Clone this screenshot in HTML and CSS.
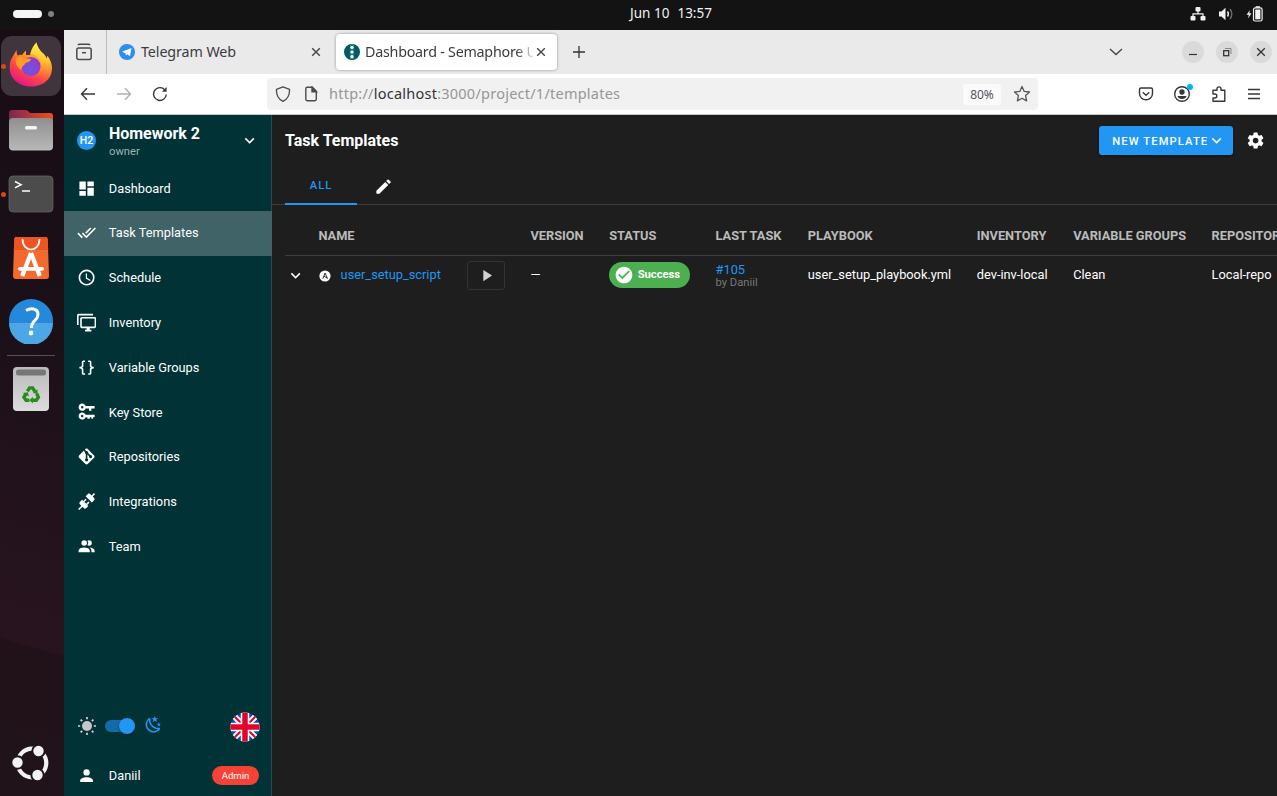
FILE: index.html
```html
<!DOCTYPE html>
<html lang="en">
<head>
<meta charset="utf-8">
<title>Dashboard - Semaphore UI</title>
<link rel="stylesheet" href="styles.css">
</head>
<body>
<div class="desktop">
  <header class="topbar">
    <div class="workspaces"><i class="ws-active"></i><i class="ws-dot"></i></div>
    <div class="clock"><span>Jun 10</span><span>13:57</span></div>
    <div class="tray">
      <svg width="16" height="14" viewBox="0 0 16 14" fill="#f2f2f2"><rect x="5.500" y="0" width="5" height="4.500" rx="1"/><rect x="0.500" y="9" width="5" height="4.500" rx="1"/><rect x="10.500" y="9" width="5" height="4.500" rx="1"/><path d="M8 4v3M3 9.500V6.800h10v2.700" fill="none" stroke="#f2f2f2" stroke-width="1.200"/></svg>
      <svg width="16" height="14" viewBox="0 0 16 14"><path d="M1 4.500h2.500L7.500 0.800v12.400L3.500 9.500H1z" fill="#f2f2f2"/><path d="M9.500 4.500q1.800 2.500 0 5" fill="none" stroke="#f2f2f2" stroke-width="1.400"/><path d="M12 2q3.600 5 0 10" fill="none" stroke="#6a6a6a" stroke-width="1.400"/></svg>
      <svg width="17" height="16" viewBox="0 0 17 16"><path d="M4 4L0.500 8.800h2.300L2 12.500 5.500 7.200H3.200z" fill="#f2f2f2"/><rect x="7.500" y="1.800" width="8.600" height="13.200" rx="1.800" fill="none" stroke="#f2f2f2" stroke-width="1.200"/><rect x="9.200" y="3.500" width="5.200" height="9.800" fill="#f2f2f2"/><rect x="9.700" y="0.200" width="4.200" height="1.500" fill="#f2f2f2"/></svg>
    </div>
  </header>

  <aside class="dock">
    <div class="dock-app focused"><i class="run-dot"></i>
      <svg width="44" height="46" viewBox="0 0 44 46">
        <defs>
          <linearGradient id="ff" x1="0.800" y1="0" x2="0.250" y2="1"><stop offset="0" stop-color="#ffe948"/><stop offset="0.350" stop-color="#ffa425"/><stop offset="0.650" stop-color="#ff4a45"/><stop offset="1" stop-color="#e3118c"/></linearGradient>
          <radialGradient id="ffg" cx="0.450" cy="0.650" r="0.650"><stop offset="0" stop-color="#6a58e0"/><stop offset="1" stop-color="#9a35cf"/></radialGradient>
          <linearGradient id="fft" x1="0" y1="0" x2="0" y2="1"><stop offset="0" stop-color="#ffef4a"/><stop offset="0.500" stop-color="#ffc433"/><stop offset="1" stop-color="#ff6a3a" stop-opacity="0"/></linearGradient>
        </defs>
        <path d="M7.500 8q0 3.500 1 5.500 2.500-1 4.500-.5 2-3 4-4.500v4.500h4C22 8 24 4 27.500 .5c1 5 3 7 5.500 10 2 1.500 4 4 4.500 6l1-2.500c3 4 4.500 8 4.500 12 0 11.500-9.500 18.500-21 18.500S.7 37 .7 26c0-4 .3-8 2.800-11z" fill="url(#ff)"/>
        <path d="M27.500 .5C24 4 22.500 8 21.500 12c7 1 12 6 10.500 14-2 6-6 9-11 9.500 9 4 19-1 20.500-11 .5-4-1-8-3-10.500l-1 2.500c-.5-2-2.500-4.500-4.500-6-2.500-3-4.500-5-5.500-10z" fill="url(#fft)"/>
        <circle cx="22" cy="24.500" r="9.500" fill="url(#ffg)"/>
        <path d="M6.500 17c3-2.500 7-3 9-1 2 1 5.500 0 6.500 1.500-1 3-6 3-6 4.500-1.500 2-3.500 2.500-3.500 6-4-2-6-6-6-11z" fill="#ff9b22"/>
      </svg>
    </div>
    <div class="dock-app">
      <svg width="46" height="44" viewBox="0 0 46 44"><defs><linearGradient id="fo" x1="0" x2="1"><stop offset="0" stop-color="#7c2550"/><stop offset="1" stop-color="#e8501f"/></linearGradient><linearGradient id="fg" x1="0" y1="0" x2="0" y2="1"><stop offset="0" stop-color="#8f8f8f"/><stop offset="1" stop-color="#b9b9b9"/></linearGradient></defs><path d="M1 34V5q0-3 3-3h13q2 0 3 1l2 2h20q3 0 3 3v26z" fill="url(#fo)"/><rect x="1" y="10" width="44" height="32.500" rx="4" fill="url(#fg)"/><rect x="17" y="18" width="12" height="3.500" rx="1.600" fill="#f5f5f5"/></svg>
    </div>
    <div class="dock-app"><i class="run-dot"></i>
      <svg width="46" height="38" viewBox="0 0 46 38"><rect x="1" y="1" width="44" height="36" rx="4" fill="#4c4c4c" stroke="#686868" stroke-width=".7"/><path d="M7 6.500l6 3.200-6 3.200" fill="none" stroke="#fff" stroke-width="1.500"/><path d="M14 16h8" stroke="#fff" stroke-width="1.500"/></svg>
    </div>
    <div class="dock-app">
      <svg width="38" height="44" viewBox="0 0 38 44"><path d="M4.500 1h29q2 0 2.200 2L37 40q0 3-3 3H4q-3 0-3-3L2.300 3q.2-2 2.200-2z" fill="#f4692e"/><path d="M4.500 1h29q2 0 2.200 2L36.200 14H1.800L2.300 3q.2-2 2.200-2z" fill="#ee5322"/><path d="M10.500 3c0 14 17 14 17 0" fill="none" stroke="#fff" stroke-width="1.700"/><path d="M19 17L10.200 40M19 17L27.800 40" stroke="#fff" stroke-width="4.300" fill="none"/><rect x="6" y="31" width="26" height="3.700" rx="1.800" fill="#fff"/></svg>
    </div>
    <div class="dock-app help">
      <svg width="46" height="46" viewBox="0 0 46 46"><circle cx="23" cy="23" r="22" fill="#2588db"/><path d="M1 25h44a22 22 0 0 1-44 0z" fill="#4ba7e6"/><path d="M18 12.500q4-2.300 7.500-1.500 4.500 1 4.500 5.500c0 4-2.500 5-4.500 7.500-1.800 2-2.200 3.500-2.200 6" fill="none" stroke="#fff" stroke-width="3"/><circle cx="23" cy="35" r="2.400" fill="#fff"/></svg>
    </div>
    <div class="dock-line"></div>
    <div class="dock-app trash">
      <svg width="38" height="46" viewBox="0 0 38 46"><defs><linearGradient id="tr" x1="0" y1="0" x2="0" y2="1"><stop offset="0" stop-color="#bababa"/><stop offset="1" stop-color="#dcdcdc"/></linearGradient></defs><rect x="1" y="1" width="36" height="44" rx="4" fill="url(#tr)"/><rect x="4" y="3.500" width="30" height="6" rx="2.500" fill="#777"/><g transform="translate(3 3.600) scale(.85)"><g fill="none" stroke="#288c1c" stroke-width="4"><path d="M14.500 25.500l2.700-4h3.500l2.800 4.500"/><path d="M25.500 28l2 4.500-2.500 3.500h-4.500"/><path d="M17 36h-4l-2.500-3.500 2.300-4"/></g><path d="M26.500 23v5.500l-5.500-1zM21 32v8l-4-4zM9 27.500l6-1 1.500 5z" fill="#288c1c"/></g></svg>
    </div>
    <div class="dock-app launcher">
      <svg width="38" height="38" viewBox="0 0 38 38"><circle cx="20" cy="19" r="14.300" fill="none" stroke="#f2f2f2" stroke-width="4.200"/><g fill="#f2f2f2" stroke="#21131a" stroke-width="2"><circle cx="5.500" cy="18.500" r="6.200"/><circle cx="26.500" cy="7" r="6.200"/><circle cx="25.500" cy="31" r="6.200"/></g></svg>
    </div>
  </aside>

  <main class="window">
    <div class="tabstrip">
      <div class="recent"><svg width="18" height="18" viewBox="0 0 18 18" fill="none" stroke="#4b4b4f" stroke-width="1.500"><path d="M3 2.200q.5-1 1.500-1h9q1 0 1.500 1"/><rect x="1.800" y="5" width="14.400" height="11.500" rx="2"/><path d="M7 9.700h4"/></svg></div>
      <div class="tab">
        <svg width="16" height="16" viewBox="0 0 16 16"><circle cx="8" cy="8" r="8" fill="#2f8df0"/><path d="M3 7.800L12.500 4 11 12.200 8.300 10.300 7 11.600 6.500 9.300z" fill="#fff"/><path d="M6.500 9.300L10.500 6 7.500 9.800" fill="#b9d8fa"/></svg>
        <span class="tab-title">Telegram Web</span>
        <svg class="x" width="10" height="10" viewBox="0 0 10 10"><path d="M1.200 1.200l7.600 7.600M8.800 1.200L1.200 8.800" stroke="#45454a" stroke-width="1.400"/></svg>
      </div>
      <div class="tab selected">
        <svg width="16" height="16" viewBox="0 0 16 16"><circle cx="8" cy="8" r="8" fill="#035a60"/><rect x="5.800" y="0.500" width="4.400" height="15" rx="1" fill="#2b747a"/><g fill="#fff"><circle cx="8" cy="3.300" r="1.600"/><circle cx="8" cy="8" r="1.600"/><circle cx="8" cy="12.700" r="1.600"/></g></svg>
        <span class="tab-title fade">Dashboard - Semaphore UI</span>
        <svg class="x" width="10" height="10" viewBox="0 0 10 10"><path d="M1.200 1.200l7.600 7.600M8.800 1.200L1.200 8.800" stroke="#45454a" stroke-width="1.400"/></svg>
      </div>
      <svg class="plus" width="14" height="14" viewBox="0 0 14 14"><path d="M7 1v12M1 7h12" stroke="#333" stroke-width="1.300"/></svg>
      <svg class="tabs-menu" width="14" height="10" viewBox="0 0 14 10"><path d="M1 2l6 5.500L13 2" fill="none" stroke="#45454a" stroke-width="1.400"/></svg>
      <div class="controls">
        <span><svg width="10" height="10" viewBox="0 0 10 10"><path d="M1 7.500h8" stroke="#333" stroke-width="1.200"/></svg></span>
        <span><svg width="10" height="10" viewBox="0 0 10 10" fill="none"><path d="M3 1.500h6V7" stroke="#888" stroke-width="1"/><rect x="1.700" y="3.700" width="5" height="5" stroke="#333" stroke-width="1.300"/></svg></span>
        <span><svg width="10" height="10" viewBox="0 0 10 10"><path d="M1.200 1.200l7.600 7.600M8.800 1.200L1.200 8.800" stroke="#333" stroke-width="1.300"/></svg></span>
      </div>
    </div>

    <div class="navbar">
      <svg width="16" height="16" viewBox="0 0 16 16" fill="none" stroke="#37373b" stroke-width="1.400"><path d="M15 8H1.500M7 2.300L1.500 8 7 13.700"/></svg>
      <svg width="16" height="16" viewBox="0 0 16 16" fill="none" stroke="#b0b0b2" stroke-width="1.400"><path d="M1 8h13.500M9 2.300L14.500 8 9 13.700"/></svg>
      <svg width="16" height="16" viewBox="0 0 16 16" fill="none" stroke="#37373b" stroke-width="1.400"><path d="M14.300 8.500A6.400 6.400 0 1 1 11.500 2.700L13 4"/><path d="M14.600 1v4.700H9.900z" fill="#37373b" stroke="none"/></svg>
      <div class="urlbar">
        <svg width="16" height="16" viewBox="0 0 16 16" fill="none" stroke="#4b4b4f" stroke-width="1.300"><path d="M8 .8l6.500 2.500c.3 5-1.500 9.500-6.500 12C3 12.800 1.200 8.300 1.500 3.300z" stroke-linejoin="round"/></svg>
        <svg width="16" height="16" viewBox="0 0 16 16" fill="none" stroke="#4b4b4f" stroke-width="1.400"><path d="M4.300 1.300h5l4 4v8q0 1.400-1.400 1.400H4.200q-1.400 0-1.400-1.400V2.700q0-1.400 1.500-1.400z"/><path d="M9 1v4.700h4.500z" fill="#4b4b4f"/></svg>
        <span class="url">http://<b>localhost</b>:3000/project/1/templates</span>
        <span class="zoom">80%</span>
        <svg width="18" height="18" viewBox="0 0 18 18" fill="none" stroke="#55555a" stroke-width="1.300"><path d="M9 1.500l2.200 4.900 5.300.6-3.900 3.600 1 5.300L9 13.300l-4.600 2.600 1-5.300L1.500 7l5.300-.6z" stroke-linejoin="round"/></svg>
      </div>
      <div class="nav-tools">
        <svg width="16" height="16" viewBox="0 0 16 16" fill="none" stroke="#37373b" stroke-width="1.400"><path d="M3 2h10q1.500 0 1.500 1.500V7.500a6.500 6.200 0 0 1-13 0V3.500Q1.500 2 3 2z"/><path d="M4.800 6.300L8 9.300l3.200-3"/></svg>
        <svg width="20" height="20" viewBox="0 0 20 20"><circle cx="9" cy="10" r="7.300" fill="none" stroke="#37373b" stroke-width="1.400"/><circle cx="9" cy="8" r="2.700" fill="#37373b"/><path d="M4.500 12h9c-.5 4-8.500 4-9 0z" fill="#37373b"/><circle cx="17" cy="3" r="3" fill="#00b3f4"/></svg>
        <svg class="puzzle" width="16" height="16" viewBox="0 0 16 16" fill="none" stroke="#37373b" stroke-width="1.400"><path d="M2 6.200V4.300h4V2.900a2 2 0 0 1 4 0v1.400h3.800v11H2V12h1.800a2 2 0 0 0 0-4H2z" stroke-linejoin="round"/></svg>
        <svg width="14" height="14" viewBox="0 0 14 14"><path d="M1 2.500h12M1 7h12M1 11.500h12" stroke="#37373b" stroke-width="1.300"/></svg>
      </div>
    </div>

    <div class="app">
      <nav class="sidebar">
        <div class="project">
          <span class="avatar">H2</span>
          <div class="project-text"><strong>Homework 2</strong><small>owner</small></div>
          <svg class="mdi" viewBox="0 0 24 24"><path d="M7.410 8.580L12 13.170L16.590 8.580L18 10L12 16L6 10Z"/></svg>
        </div>
        <div class="item"><svg class="mdi" viewBox="0 0 24 24"><path d="M13,3V9H21V3M13,21H21V11H13M3,21H11V15H3M3,13H11V3H3V13Z"/></svg>Dashboard</div>
        <div class="item active"><svg class="mdi" viewBox="0 0 24 24"><path d="M0.41,13.41L6,19L7.41,17.58L1.83,12M22.24,5.58L11.66,16.17L7.5,12L6.07,13.41L11.66,19L23.66,7M18,7L16.59,5.58L10.24,11.93L11.66,13.34L18,7Z"/></svg>Task Templates</div>
        <div class="item"><svg class="mdi" viewBox="0 0 24 24"><path d="M12,20A8,8 0 0,0 20,12A8,8 0 0,0 12,4A8,8 0 0,0 4,12A8,8 0 0,0 12,20M12,2A10,10 0 0,1 22,12A10,10 0 0,1 12,22C6.47,22 2,17.5 2,12A10,10 0 0,1 12,2M12.5,7V12.25L17,14.92L16.25,16.15L11,13V7H12.5Z"/></svg>Schedule</div>
        <div class="item"><svg class="mdi" viewBox="0 0 24 24"><path d="M22,17V7H6V17H22M22,5A2,2 0 0,1 24,7V17C24,18.11 23.1,19 22,19H16V21H18V23H10V21H12V19H6C4.89,19 4,18.11 4,17V7A2,2 0 0,1 6,5H22M2,3V15H0V3A2,2 0 0,1 2,1H20V3H2Z"/></svg>Inventory</div>
        <div class="item"><svg class="mdi" viewBox="0 0 24 24"><path d="M8,3A2,2 0 0,0 6,5V9A2,2 0 0,1 4,11H3V13H4A2,2 0 0,1 6,15V19A2,2 0 0,0 8,21H10V19H8V14A2,2 0 0,0 6,12A2,2 0 0,0 8,10V5H10V3M16,3A2,2 0 0,1 18,5V9A2,2 0 0,0 20,11H21V13H20A2,2 0 0,0 18,15V19A2,2 0 0,1 16,21H14V19H16V14A2,2 0 0,1 18,12A2,2 0 0,1 16,10V5H14V3H16Z"/></svg>Variable Groups</div>
        <div class="item"><svg class="mdi" viewBox="0 0 24 24"><path d="M6.5,2C8.46,2 10.13,3.25 10.74,5H22V8H18V11H15V8H10.74C10.13,9.75 8.46,11 6.5,11C4,11 2,9 2,6.5C2,4 4,2 6.5,2M6.5,5A1.5,1.5 0 0,0 5,6.5A1.5,1.5 0 0,0 6.5,8A1.5,1.5 0 0,0 8,6.5A1.5,1.5 0 0,0 6.5,5M6.5,13C8.46,13 10.13,14.25 10.74,16H22V19H20V21H18V19H16V21H13V19H10.74C10.13,20.75 8.46,22 6.5,22C4,22 2,20 2,17.5C2,15 4,13 6.5,13M6.5,16A1.5,1.5 0 0,0 5,17.5A1.5,1.5 0 0,0 6.5,19A1.5,1.5 0 0,0 8,17.5A1.5,1.5 0 0,0 6.5,16Z"/></svg>Key Store</div>
        <div class="item"><svg class="mdi" viewBox="0 0 24 24"><path d="M2.6,10.59L8.38,4.8L10.07,6.5C9.83,7.35 10.22,8.28 11,8.73V14.27C10.4,14.61 10,15.26 10,16A2,2 0 0,0 12,18A2,2 0 0,0 14,16C14,15.26 13.6,14.61 13,14.27V9.41L15.07,11.5C15,11.65 15,11.82 15,12A2,2 0 0,0 17,14A2,2 0 0,0 19,12A2,2 0 0,0 17,10C16.82,10 16.65,10 16.5,10.07L13.93,7.5C14.19,6.57 13.71,5.55 12.78,5.16C12.35,5 11.9,4.96 11.5,5.07L9.8,3.38L10.59,2.6C11.37,1.81 12.63,1.81 13.41,2.6L21.4,10.59C22.19,11.37 22.19,12.63 21.4,13.41L13.41,21.4C12.63,22.19 11.37,22.19 10.59,21.4L2.6,13.41C1.81,12.63 1.81,11.37 2.6,10.59Z"/></svg>Repositories</div>
        <div class="item"><svg class="mdi" viewBox="0 0 24 24"><path d="M21.4 7.5C22.2 8.3 22.2 9.6 21.4 10.3L18.6 13.1L10.8 5.3L13.6 2.5C14.4 1.7 15.7 1.7 16.4 2.5L18.2 4.3L21.2 1.3L22.6 2.7L19.6 5.7L21.4 7.5M15.6 13.3L14.2 11.9L11.4 14.7L9.3 12.6L12.1 9.8L10.7 8.4L7.9 11.2L6.4 9.8L3.6 12.6C2.8 13.4 2.8 14.7 3.6 15.4L5.4 17.2L1.4 21.2L2.8 22.6L6.8 18.6L8.6 20.4C9.4 21.2 10.7 21.2 11.4 20.4L14.2 17.6L12.8 16.2L15.6 13.3Z"/></svg>Integrations</div>
        <div class="item"><svg class="mdi" viewBox="0 0 24 24"><path d="M16 17V19H2V17S2 13 9 13 16 17 16 17M12.5 7.5A3.5 3.5 0 1 0 9 11A3.5 3.5 0 0 0 12.5 7.5M15.94 13A5.32 5.32 0 0 1 18 17V19H22V17S22 13.37 15.94 13M15 4A3.39 3.39 0 0 0 13.07 4.59A5 5 0 0 1 13.07 10.41A3.39 3.39 0 0 0 15 11A3.5 3.5 0 0 0 15 4Z"/></svg>Team</div>
        <div class="theme-row">
          <svg width="20" height="20" viewBox="0 0 20 20"><circle cx="10" cy="10" r="5" fill="#c6c6c6"/><path d="M10 1v2.200M10 16.800V19M1 10h2.200M16.800 10H19M3.600 3.600l1.600 1.600M14.800 14.800l1.600 1.600M3.600 16.400l1.600-1.600M14.800 5.200l1.600-1.600" stroke="#d8d2c8" stroke-width="1.700"/></svg>
          <span class="switch"><i></i></span>
          <svg class="mdi moon" viewBox="0 0 24 24"><path d="M17.75,4.09L15.22,6.03L16.13,9.09L13.5,7.28L10.87,9.09L11.78,6.03L9.25,4.09L12.44,4L13.5,1L14.56,4L17.75,4.09M21.25,11L19.61,12.25L20.2,14.23L18.5,13.06L16.8,14.23L17.39,12.25L15.75,11L17.81,10.95L18.5,9L19.19,10.95L21.25,11M18.97,15.95C19.8,15.87 20.69,17.05 20.16,17.8C19.84,18.25 19.5,18.67 19.08,19.07C15.17,23 8.84,23 4.94,19.07C1.03,15.17 1.03,8.83 4.94,4.93C5.34,4.53 5.76,4.17 6.21,3.85C6.96,3.32 8.14,4.21 8.06,5.04C7.79,7.9 8.75,10.87 10.95,13.06C13.14,15.26 16.1,16.22 18.97,15.95M17.33,17.97C14.5,17.81 11.7,16.64 9.53,14.5C7.36,12.31 6.2,9.5 6.04,6.68C3.23,9.82 3.34,14.64 6.35,17.66C9.37,20.67 14.19,20.78 17.33,17.97Z"/></svg>
          <svg class="flag" width="30" height="30" viewBox="0 0 30 30"><clipPath id="fl"><circle cx="15" cy="15" r="14.600"/></clipPath><g clip-path="url(#fl)"><path d="M0 0h30v30H0z" fill="#0a4db0"/><path d="M2 2l26 26M28 2L2 28" stroke="#fff" stroke-width="6"/><path d="M2 2l26 26M28 2L2 28" stroke="#e0052d" stroke-width="2.200"/><path d="M15 0v30M0 15h30" stroke="#fff" stroke-width="8.500"/><path d="M15 0v30M0 15h30" stroke="#e0052d" stroke-width="5.500"/></g></svg>
        </div>
        <div class="user-row"><svg class="mdi" viewBox="0 0 24 24"><path d="M12,4A4,4 0 0,1 16,8A4,4 0 0,1 12,12A4,4 0 0,1 8,8A4,4 0 0,1 12,4M12,14C16.42,14 20,15.79 20,18V20H4V18C4,15.79 7.58,14 12,14Z"/></svg><span>Daniil</span><em>Admin</em></div>
      </nav>

      <section class="content">
        <div class="toolbar">
          <h1>Task Templates</h1>
          <button class="new">NEW TEMPLATE<svg viewBox="0 0 24 24"><path d="M7.410 8.580L12 13.170L16.590 8.580L18 10L12 16L6 10Z"/></svg></button>
          <svg class="mdi" viewBox="0 0 24 24"><path d="M12,15.5A3.5,3.5 0 0,1 8.5,12A3.5,3.5 0 0,1 12,8.5A3.5,3.5 0 0,1 15.5,12A3.5,3.5 0 0,1 12,15.5M19.43,12.97C19.47,12.65 19.5,12.33 19.5,12C19.5,11.67 19.47,11.34 19.43,11L21.54,9.37C21.73,9.22 21.78,8.95 21.66,8.73L19.66,5.27C19.54,5.05 19.27,4.96 19.05,5.05L16.56,6.05C16.04,5.66 15.5,5.32 14.87,5.07L14.5,2.42C14.46,2.18 14.25,2 14,2H10C9.75,2 9.54,2.18 9.5,2.42L9.13,5.07C8.5,5.32 7.96,5.66 7.44,6.05L4.95,5.05C4.73,4.96 4.46,5.05 4.34,5.27L2.34,8.73C2.21,8.95 2.27,9.22 2.46,9.37L4.57,11C4.53,11.34 4.5,11.67 4.5,12C4.5,12.33 4.53,12.65 4.57,12.97L2.46,14.63C2.27,14.78 2.21,15.05 2.34,15.27L4.34,18.73C4.46,18.95 4.73,19.03 4.95,18.95L7.44,17.94C7.96,18.34 8.5,18.68 9.13,18.93L9.5,21.58C9.54,21.82 9.75,22 10,22H14C14.25,22 14.46,21.82 14.5,21.58L14.87,18.93C15.5,18.67 16.04,18.34 16.56,17.94L19.05,18.95C19.27,19.03 19.54,18.95 19.66,18.73L21.66,15.27C21.78,15.05 21.73,14.78 21.54,14.63L19.43,12.97Z"/></svg>
        </div>
        <div class="views">
          <span class="view-tab">ALL</span>
          <svg class="mdi" viewBox="0 0 24 24"><path d="M20.71,7.04C21.1,6.65 21.1,6 20.71,5.63L18.37,3.29C18,2.9 17.35,2.9 16.96,3.29L15.12,5.12L18.87,8.87M3,17.25V21H6.75L17.81,9.93L14.06,6.18L3,17.25Z"/></svg>
        </div>
        <div class="table">
          <div class="row head"><span></span><span>NAME</span><span>VERSION</span><span>STATUS</span><span>LAST TASK</span><span>PLAYBOOK</span><span>INVENTORY</span><span>VARIABLE GROUPS</span><span>REPOSITORY</span></div>
          <div class="row">
            <svg class="mdi expand" viewBox="0 0 24 24"><path d="M7.410 8.580L12 13.170L16.590 8.580L18 10L12 16L6 10Z"/></svg>
            <div class="name"><svg class="kind" width="12" height="12" viewBox="0 0 12 12"><circle cx="6" cy="6" r="5.600" fill="#fff"/><path d="M3.800 8.700L6 3l2.500 5.400L5 6" fill="none" stroke="#1e1e1e" stroke-width=".9"/></svg><a>user_setup_script</a><button class="run"><svg viewBox="0 0 24 24"><path d="M8,5.140V19.140L19,12.140L8,5.140Z"/></svg></button></div>
            <span>—</span>
            <span class="chip"><svg viewBox="0 0 24 24"><path d="M12 2C6.5 2 2 6.5 2 12S6.5 22 12 22 22 17.5 22 12 17.5 2 12 2M10 17L5 12L6.410 10.590L10 14.170L17.590 6.580L19 8L10 17Z"/></svg>Success</span>
            <div class="task"><a>#105</a><small>by Daniil</small></div>
            <span>user_setup_playbook.yml</span><span>dev-inv-local</span><span>Clean</span><span>Local-repo</span>
          </div>
        </div>
      </section>
    </div>
  </main>
</div>
</body>
</html>
```
FILE: styles.css
```css
* { box-sizing: border-box; }
body { margin: 0; overflow: hidden; font-family: Roboto, sans-serif; }
svg { display: block; flex: none; }
i, em { font-style: normal; }
.desktop { width: 1277px; height: 796px; display: grid; grid-template: 30px 766px / 64px 1213px; overflow: hidden; }

/* System bar */
.topbar { grid-column: 1 / 3; background: #131313; display: grid; grid-template-columns: 1fr auto 1fr; align-items: center; color: #f2f2f2; }
.workspaces { display: flex; align-items: center; gap: 6px; padding: 0 0 3px 13px; }
.ws-active { width: 29px; height: 8px; border-radius: 4px; background: #f5f5f5; }
.ws-dot { width: 6px; height: 6px; border-radius: 3px; background: #808080; }
.clock { display: flex; gap: 8px; font: 13.5px/20px "Noto Sans", sans-serif; letter-spacing: 0; padding: 0 0 4px 65px; }
.tray { display: flex; justify-content: flex-end; align-items: center; gap: 12px; padding: 0 14px 3px 0; }

/* Launcher dock */
.dock { background: linear-gradient(196deg, #190d15 0%, #1c1018 40%, #28141f 79.7%, #201218 80%, #21131a 100%); display: flex; flex-direction: column; align-items: center; padding: 6px 2px 0 0; }
.dock-app { width: 60px; height: 60px; flex: none; margin-bottom: 4px; display: flex; align-items: center; justify-content: center; position: relative; }
.focused { background: #40353c; border-radius: 11px; }
.focused svg { margin-top: -2px; }
.help svg { margin-top: -2px; }
.run-dot { position: absolute; left: 0; top: 28px; width: 5px; height: 5px; border-radius: 50%; background: #d7481d; }
.dock-line { width: 48px; height: 1px; background: #5a4f56; margin: -1px 0 3px; flex: none; }
.launcher { margin-top: auto; margin-bottom: 3px; }

/* Browser chrome */
.window { display: grid; grid-template-rows: 44px 41px 681px; color: #3b3b3f; font-family: "Noto Sans", sans-serif; min-width: 0; }
.tabstrip { background: #eaeaea; display: flex; align-items: center; }
.recent { width: 43px; height: 44px; border-right: 1px solid #bdbdbd; padding: 13px 11px; }
.tab { display: flex; align-items: center; width: 229px; padding-left: 12px; height: 36px; }
.selected { width: 221px; background: #fff; border-radius: 4px; box-shadow: 0 0 3px rgba(0,0,0,.4); padding-left: 8px; }
.tab-title { font-size: 14.3px; line-height: 20px; margin-left: 6px; white-space: nowrap; overflow: hidden; width: 167px; letter-spacing: -.1px; }
.x { margin-left: 3px; }
.selected .tab-title { width: 168px; margin-left: 5px; letter-spacing: -.25px; }
.selected .x { margin-left: 3px; }
.fade { -webkit-mask-image: linear-gradient(90deg, #000 90%, transparent 102%); mask-image: linear-gradient(90deg, #000 90%, transparent 102%); }
.plus { margin-left: 15px; }
.tabs-menu { margin-left: auto; }
.controls { display: flex; gap: 12px; margin: 0 5px 0 59px; }
.controls span { width: 22px; height: 22px; border-radius: 50%; background: #dadada; display: grid; place-items: center; }
.navbar { background: #fff; border-bottom: 1px solid #c8c8c8; display: flex; align-items: center; gap: 20px; padding-left: 16px; }
.urlbar { width: 771px; height: 32px; background: #f1f1f1; border-radius: 4px; margin-left: 79px; display: flex; align-items: center; padding: 0 7px 0 8px; gap: 12px; }
.url { font-size: 14.5px; color: #969699; margin-left: -2px; letter-spacing: .24px; margin-right: auto; line-height: 20px; padding-bottom: 2px; }
.url b { font-weight: 400; color: #333338; }
.zoom { font: 12px/21px "Noto Sans", sans-serif; background: #fafafa; width: 38px; text-align: center; border-radius: 3px; color: #55555a; }
.nav-tools { display: flex; align-items: center; gap: 19px; margin: 0 16px 0 auto; }
.puzzle { margin: 0 1px 0 -1px; }

/* Application */
.app { display: grid; grid-template-columns: 208px 1005px; background: #1e1e1e; color: #fff; font: 12.8px/19px Roboto, sans-serif; min-width: 0; }
.mdi { width: 19.2px; height: 19.2px; fill: currentColor; }
.sidebar { background: #003236; border-right: 1px solid #2b4a4d; display: flex; flex-direction: column; padding-bottom: 1px; }
.project { height: 50.9px; display: flex; align-items: center; padding: 0 12px 0 13px; }
.avatar { width: 19px; height: 19px; border-radius: 50%; background: #2196f3; font: 500 10.5px/19px Roboto, sans-serif; text-align: center; }
.project-text { margin: 0 auto 0 13px; padding-top: 2px; display: grid; }
.project-text strong { font: 700 16px/20px Roboto, sans-serif; letter-spacing: -.03px; }
.project-text small { font: 11.2px/15px Roboto, sans-serif; color: #9fb3b5; }
.item { height: 44.750px; padding-left: 13px; display: flex; align-items: center; gap: 12.600px; }
.active { background: #3f6366; width: 208px; height: 45px; margin-bottom: -.25px; padding-bottom: 1px; }
.theme-row { display: flex; align-items: center; height: 44px; margin-top: auto; padding: 0 12px 0 13px; }
.theme-row > :first-child { margin-left: -.5px; }
.switch { width: 30px; height: 12px; border-radius: 6px; background: #156ba8; margin: 0 9px 0 8.500px; display: flex; align-items: center; justify-content: flex-end; }
.switch i { width: 16px; height: 16px; border-radius: 50%; background: #2196f3; box-shadow: 0 1px 3px rgba(0,0,0,.4); }
.moon { color: #2196f3; margin-top: -3px; }
.flag { margin-left: auto; margin-right: -.5px; margin-top: 1px; }
.user-row { height: 44.8px; display: flex; align-items: center; padding: 0 12px 0 13px; gap: 12.600px; margin-top: 5px; margin-bottom: -3px; }
.user-row em { margin-left: auto; background: #f44336; font-size: 9.6px; line-height: 19px; border-radius: 10px; width: 47px; text-align: center; }
.content { overflow: hidden; min-width: 0; }
.toolbar { display: flex; align-items: center; height: 51px; padding: 0 12px 0 13px; }
.toolbar h1 { font: 700 16px/24px Roboto, sans-serif; margin: 0 auto 0 0; }
.new { height: 29px; width: 134px; border: 0; border-radius: 3px; background: #2196f3; color: #fff; font: 500 11.2px/18px Roboto, sans-serif; letter-spacing: 1.100px; display: flex; align-items: center; padding: 2px 0 0 13.500px; margin-right: 13px; box-shadow: 0 1px 3px #0008; }
.new svg { width: 19.2px; height: 19.2px; fill: #fff; margin: -2px 0 0 -1px; }
.views { height: 39px; border-bottom: 1px solid #3c3c3c; display: flex; padding-left: 13px; }
.view-tab { width: 72px; height: 39px; border-bottom: 2px solid #2196f3; color: #2196f3; text-align: center; font: 500 11.2px/39px Roboto, sans-serif; letter-spacing: 1px; }
.views .mdi { margin: 11px 0 0 17px; }
.table { padding-left: 13px; }
.row { display: grid; grid-template-columns: 33.400px 212px 78.800px 106.400px 92.200px 169px 96.400px 138.400px 120px; width: 1047px; align-items: center; height: 37px; white-space: nowrap; }
.head { height: 51px; padding-top: 11px; border-bottom: 1px solid #3c3c3c; color: #bbb; font-weight: 700; }
.expand { margin: 3px 0 0 1px; }
.kind { margin: 2px 0 0 .6px; }
.name { display: flex; align-items: center; height: 37px; }
.name a { margin-left: 9.600px; }
a { color: #2196f3; }
.run { width: 38px; height: 29px; margin: 2px 25.400px 0 auto; border: 1px solid #343434; border-radius: 3px; background: none; display: grid; place-items: center; padding: 0; }
.run svg { width: 19px; height: 19px; fill: #d2d2d2; }
.chip { width: 81px; height: 26px; border-radius: 13px; background: #4caf50; display: flex; align-items: center; font: 700 11.2px/20px Roboto, sans-serif; gap: 4px; padding-left: 5px; margin: 1px 0 0 -.5px; }
.chip svg { width: 20px; height: 20px; fill: #fff; }
.task { display: grid; padding-top: 2px; }
.task a { line-height: 14px; }
.task small { font-size: 11.2px; line-height: 12px; color: #777; }
```
